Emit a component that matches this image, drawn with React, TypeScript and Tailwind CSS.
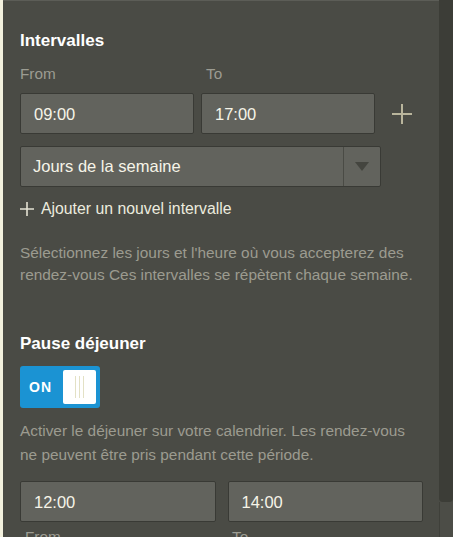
import { Plus } from 'lucide-react'

function TimeInput({ value }: { value: string }) {
  return (
    <div className="flex h-[41px] flex-1 items-center rounded-[2px] border border-[#393a35] bg-[#62635d] px-[13px] text-[16.5px] leading-[20px] text-[#f6f4e8]">
      {value}
    </div>
  )
}

export default function App() {
  return (
    <div
      className="flex h-[537px] w-[453px] overflow-hidden bg-[#4a4b45]"
      style={{ fontFamily: '"Liberation Sans", Arial, sans-serif' }}
    >
      {/* cream edge */}
      <div className="w-[3px] shrink-0 bg-[#f3f1de]" />

      {/* panel */}
      <div className="flex w-[436px] shrink-0 flex-col border-t border-[#5c5d57]">
        <section className="px-[17px] pb-[20px] pt-[30px]">
          <h2 className="text-[17px] font-bold leading-[20px] text-white">Intervalles</h2>

          <div className="mt-[14px] flex text-[15.3px] leading-[18px] text-[#9c9c92]">
            <span className="w-[186px]">From</span>
            <span>To</span>
          </div>

          <div className="mt-[10px] flex items-center">
            <div className="flex w-[355px] gap-[7px]">
              <TimeInput value="09:00" />
              <TimeInput value="17:00" />
            </div>
            <svg width="22" height="22" viewBox="0 0 22 22" className="ml-[16px]">
              <path d="M11 1v20M1 11h20" stroke="#b9b59c" strokeWidth="2" />
            </svg>
          </div>

          <div className="mt-[12px] flex h-[41px] w-[361px] items-stretch rounded-[2px] border border-[#393a35] bg-[#62635d]">
            <div className="flex flex-1 items-center px-[12px] text-[16.5px] text-[#f6f4e8]">
              Jours de la semaine
            </div>
            <div className="flex w-[37px] items-center justify-center border-l border-[#4a4b45]">
              <svg width="14" height="9" viewBox="0 0 14 9">
                <path d="M0 0h14L7 9z" fill="#44453f" />
              </svg>
            </div>
          </div>

          <div className="mt-[12px] flex items-center gap-[7px] text-[15.8px] leading-[20px] text-[#ecebdf]">
            <svg width="14" height="14" viewBox="0 0 14 14">
              <path d="M7 0v14M0 7h14" stroke="#e4e2d3" strokeWidth="1.6" />
            </svg>
            <span>Ajouter un nouvel intervalle</span>
          </div>

          <p className="mt-[23px] text-[15.4px] leading-[22px] text-[#9c9b90]">
            Sélectionnez les jours et l'heure où vous accepterez des rendez-vous Ces intervalles se
            répètent chaque semaine.
          </p>
        </section>

        <div className="h-px bg-[#393a35]" />
        <div className="h-px bg-[#55564f]" />

        <section className="px-[17px] pt-[28px]">
          <h2 className="text-[17px] font-bold leading-[20px] text-white">Pause déjeuner</h2>

          <div className="mt-[12px] flex h-[42px] w-[80px] items-center rounded-[3px] bg-[#1b93d3] pl-[9px] pr-[4px]">
            <span className="flex-1 text-[14px] font-bold tracking-[1px] text-white">ON</span>
            <div className="flex h-[34px] w-[33px] items-center justify-center gap-[3px] rounded-[2px] bg-white">
              <span className="h-[22px] w-px bg-[#e3e1c5]" />
              <span className="h-[22px] w-px bg-[#e3e1c5]" />
              <span className="h-[22px] w-px bg-[#e3e1c5]" />
            </div>
          </div>

          <p className="mt-[11px] text-[15.4px] leading-[24px] text-[#9c9b90]">
            Activer le déjeuner sur votre calendrier. Les rendez-vous ne peuvent être pris pendant
            cette période.
          </p>

          <div className="mt-[14px] flex w-[403px] gap-[12px]">
            <TimeInput value="12:00" />
            <TimeInput value="14:00" />
          </div>

          <div className="mt-[6px] flex text-[15.3px] leading-[18px] text-[#9c9c92]">
            <span className="w-[207px] pl-[5px]">From</span>
            <span className="pl-[5px]">To</span>
          </div>
        </section>
      </div>

      {/* scrollbar */}
      <div className="flex flex-1 flex-col bg-[#4a4b45]">
        <div className="h-[502px] rounded-b-[4px] bg-[#3c3d37]" />
        <div className="flex-1 border-l border-[#3f403a] bg-[#4c4d47]" />
      </div>
    </div>
  )
}
